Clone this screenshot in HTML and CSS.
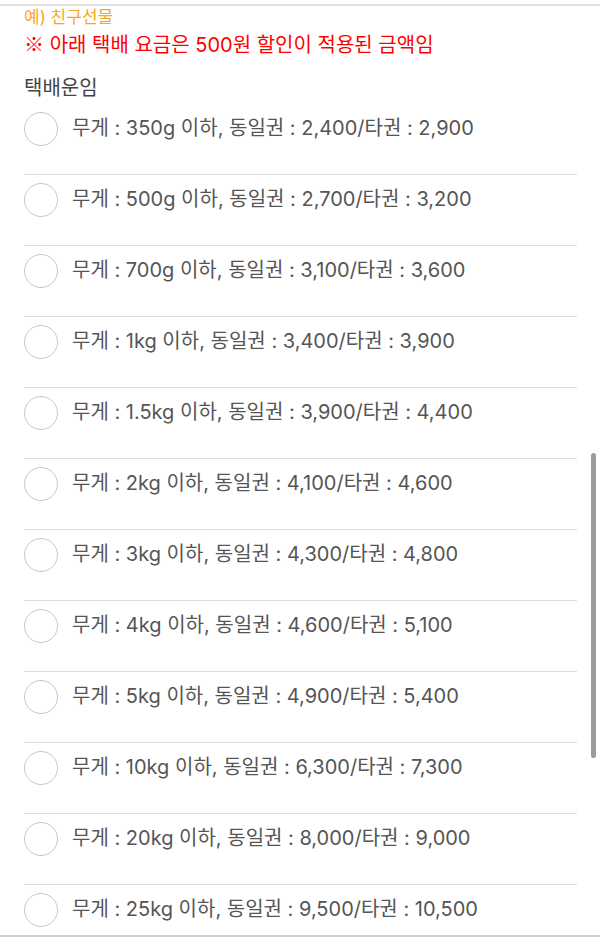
FILE: index.html
```html
<!DOCTYPE html>
<html lang="ko">
<head>
<meta charset="utf-8">
<link rel="stylesheet" href="styles.css">
</head>
<body>
<div class="top-rule"></div>
<div class="content">
  <p class="note-orange">예) 친구선물</p>
  <p class="note-red"><span class="mark">※</span> 아래 택배 요금은 500원 할인이 적용된 금액임</p>
  <p class="field-label">택배운임</p>
  <ul class="options">
    <li class="option"><span class="radio"></span><span class="opt-text">무게 : 350g 이하, 동일권 : 2,400/타권 : 2,900</span></li>
    <li class="option"><span class="radio"></span><span class="opt-text">무게 : 500g 이하, 동일권 : 2,700/타권 : 3,200</span></li>
    <li class="option"><span class="radio"></span><span class="opt-text">무게 : 700g 이하, 동일권 : 3,100/타권 : 3,600</span></li>
    <li class="option"><span class="radio"></span><span class="opt-text">무게 : 1kg 이하, 동일권 : 3,400/타권 : 3,900</span></li>
    <li class="option"><span class="radio"></span><span class="opt-text">무게 : 1.5kg 이하, 동일권 : 3,900/타권 : 4,400</span></li>
    <li class="option"><span class="radio"></span><span class="opt-text">무게 : 2kg 이하, 동일권 : 4,100/타권 : 4,600</span></li>
    <li class="option"><span class="radio"></span><span class="opt-text">무게 : 3kg 이하, 동일권 : 4,300/타권 : 4,800</span></li>
    <li class="option"><span class="radio"></span><span class="opt-text">무게 : 4kg 이하, 동일권 : 4,600/타권 : 5,100</span></li>
    <li class="option"><span class="radio"></span><span class="opt-text">무게 : 5kg 이하, 동일권 : 4,900/타권 : 5,400</span></li>
    <li class="option"><span class="radio"></span><span class="opt-text">무게 : 10kg 이하, 동일권 : 6,300/타권 : 7,300</span></li>
    <li class="option"><span class="radio"></span><span class="opt-text">무게 : 20kg 이하, 동일권 : 8,000/타권 : 9,000</span></li>
    <li class="option"><span class="radio"></span><span class="opt-text">무게 : 25kg 이하, 동일권 : 9,500/타권 : 10,500</span></li>
  </ul>
</div>
<div class="bottom-bar"></div>
<div class="scroll-thumb"></div>
</body>
</html>
```
FILE: styles.css
```css
html, body {
  margin: 0;
  padding: 0;
  background: #ffffff;
  overflow: hidden;
}
body {
  font-family: Inter, "Noto Sans CJK KR", sans-serif;
  color: #555555;
}
.top-rule {
  height: 2px;
  margin-top: 4px;
  background: #e2e2e2;
}
.content {
  padding: 0 23px 0 24px;
}
p {
  margin: 0;
}
.note-orange {
  font-size: 17px;
  line-height: 22px;
  color: #f7a823;
}
.note-red {
  margin-top: 2px;
  font-size: 20px;
  line-height: 28px;
  color: #ff0000;
}
.mark {
  font-family: "Noto Sans CJK KR", sans-serif;
}
.field-label {
  margin-top: 15px;
  font-size: 20px;
  line-height: 28px;
  color: #444444;
}
.options {
  list-style: none;
  margin: 2px 0 0;
  padding: 0;
}
.option {
  display: flex;
  align-items: center;
  gap: 14px;
  padding: 7px 0 28px;
  border-bottom: 1px solid #dedede;
}
.radio {
  flex: none;
  width: 32px;
  height: 32px;
  border: 1.5px solid #c8c8c8;
  border-radius: 50%;
}
.opt-text {
  font-size: 20px;
  line-height: 35px;
  color: #555555;
  white-space: nowrap;
}
.bottom-bar {
  position: fixed;
  left: 0;
  right: 0;
  bottom: 0;
  height: 5px;
  border-top: 2px solid #d0d0d0;
  background: #ffffff;
}
.scroll-thumb {
  position: fixed;
  right: 4px;
  top: 453px;
  width: 5px;
  height: 305px;
  border-radius: 3px;
  background: #9c9c9c;
}
```
